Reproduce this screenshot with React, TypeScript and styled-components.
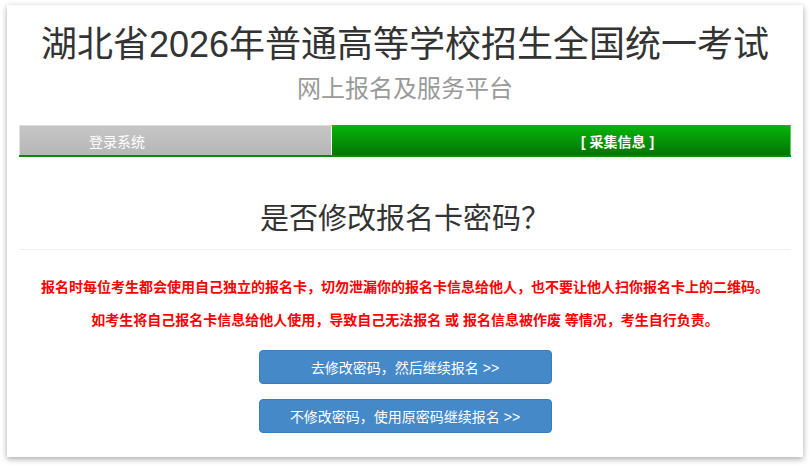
import styled, { createGlobalStyle } from "styled-components";

const GlobalStyle = createGlobalStyle`
  html, body {
    margin: 0;
    padding: 0;
    background: #ffffff;
    font-family: "Liberation Sans", "Noto Sans CJK SC", sans-serif;
  }
`;

const Page = styled.div`
  padding: 5px 8px 11px 7px;
`;

const Card = styled.div`
  background: #ffffff;
  box-shadow: 0 2px 6px rgba(0, 0, 0, 0.35);
  padding: 19px 12px 24px;
`;

const Title = styled.h1`
  margin: 0;
  font-size: 36px;
  line-height: 42px;
  font-weight: 400;
  color: #333333;
  text-align: center;
`;

const SubTitle = styled.h3`
  margin: 9px 0 0;
  font-size: 24px;
  line-height: 28px;
  font-weight: 400;
  color: #999999;
  text-align: center;
`;

const StepBar = styled.div`
  margin-top: 22px;
  display: flex;
  height: 30px;
  border-bottom: 2px solid #0a8a0a;
`;

const Step = styled.div<{ $active?: boolean; $width?: string; $offset: number }>`
  display: flex;
  align-items: center;
  width: ${(p) => p.$width ?? "auto"};
  flex: ${(p) => (p.$width ? "none" : "1")};
  padding-left: ${(p) => p.$offset}px;
  box-sizing: border-box;
  font-size: 14px;
  color: #ffffff;
  font-weight: ${(p) => (p.$active ? 700 : 400)};
  background: ${(p) =>
    p.$active
      ? "linear-gradient(to bottom, #07b30b, #037503)"
      : "linear-gradient(to bottom, #c6c6c6, #b6b6b6)"};
  border-top: 1px solid ${(p) => (p.$active ? "#08b80b" : "#dedede")};
  border-left: 1px solid ${(p) => (p.$active ? "#ffffff" : "#e2e2e2")};
  border-right: ${(p) => (p.$active ? "1px solid #5ccf5c" : "none")};
`;

const Question = styled.h2`
  margin: 43px 0 0;
  font-size: 29px;
  line-height: 32px;
  font-weight: 400;
  color: #333333;
  text-align: center;
  font-family: "Noto Sans CJK SC", sans-serif;
`;

const Divider = styled.hr`
  margin: 17px 0 0;
  border: 0;
  border-top: 1px solid #eeeeee;
`;

const Notice = styled.p<{ $gap: number }>`
  margin: ${(p) => p.$gap}px 0 0;
  font-size: 14px;
  line-height: 20px;
  font-weight: 700;
  color: #ff0000;
  text-align: center;
`;

const Actions = styled.div`
  margin-top: 20px;
  display: flex;
  flex-direction: column;
  align-items: center;
  gap: 15px;
`;

const Button = styled.button`
  width: 293px;
  height: 34px;
  background: #4589c9;
  border: 1px solid #3a7dbd;
  border-radius: 4px;
  color: #ffffff;
  font-family: inherit;
  font-size: 14px;
  cursor: pointer;
`;

export default function App() {
  return (
    <>
      <GlobalStyle />
      <Page>
        <Card>
          <Title>湖北省2026年普通高等学校招生全国统一考试</Title>
          <SubTitle>网上报名及服务平台</SubTitle>
          <StepBar>
            <Step $width="312px" $offset={69}>登录系统</Step>
            <Step $active $offset={249}>[ 采集信息 ]</Step>
          </StepBar>
          <Question>是否修改报名卡密码？</Question>
          <Divider />
          <Notice $gap={27}>
            报名时每位考生都会使用自己独立的报名卡，切勿泄漏你的报名卡信息给他人，也不要让他人扫你报名卡上的二维码。
          </Notice>
          <Notice $gap={13}>
            如考生将自己报名卡信息给他人使用，导致自己无法报名 或 报名信息被作废 等情况，考生自行负责。
          </Notice>
          <Actions>
            <Button>去修改密码，然后继续报名 &gt;&gt;</Button>
            <Button>不修改密码，使用原密码继续报名 &gt;&gt;</Button>
          </Actions>
        </Card>
      </Page>
    </>
  );
}
